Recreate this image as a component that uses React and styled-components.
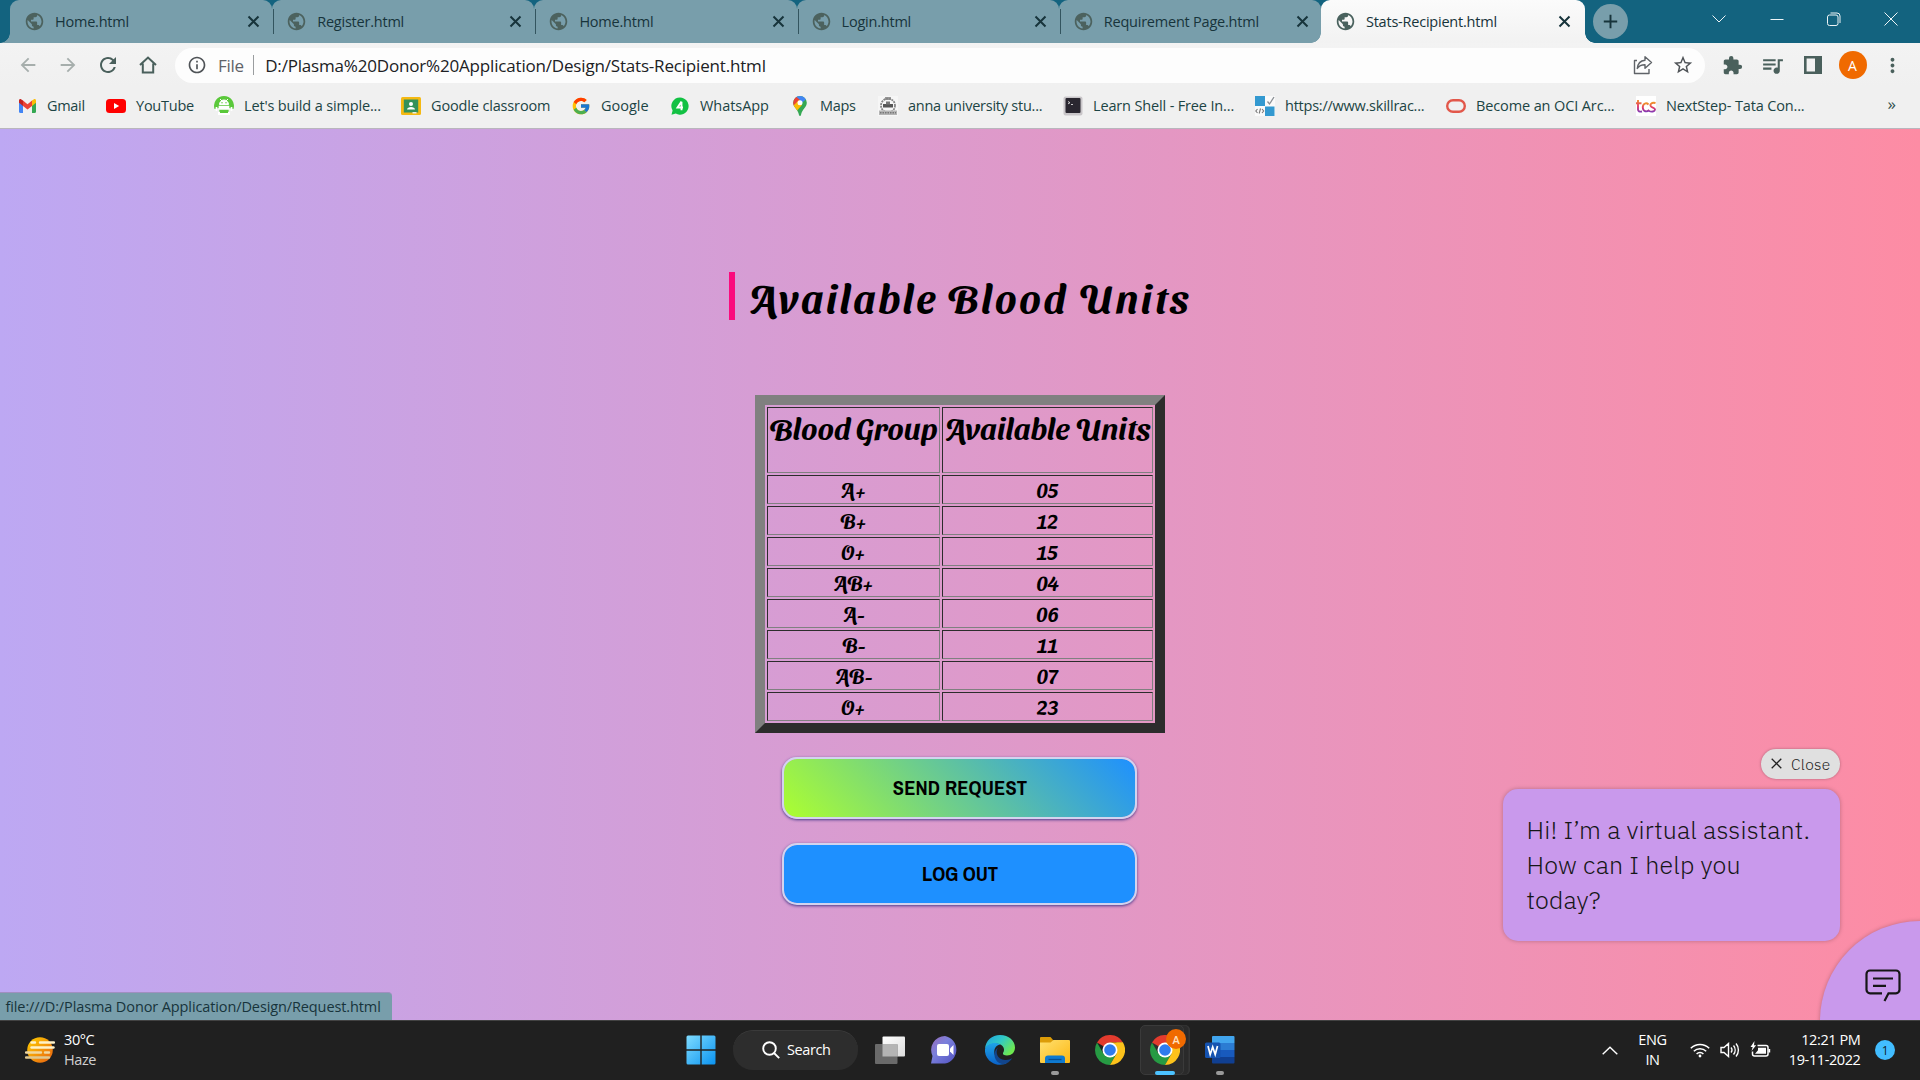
import React from "react";
import styled, { createGlobalStyle, css } from "styled-components";
import {
  MdPublic, MdArrowBack, MdArrowForward, MdRefresh, MdInfoOutline, MdStarOutline,
  MdExtension, MdQueueMusic, MdMoreVert, MdAdd,
} from "react-icons/md";
import { FcGoogle } from "react-icons/fc";

const ui = `"Open Sans", "Noto Sans", sans-serif`;
const display = `"Sansita Swashed", "Noto Sans", sans-serif`;
const plex = `"IBM Plex Sans", "Open Sans", sans-serif`;

const GlobalStyle = createGlobalStyle`
  * { box-sizing: border-box; }
  body { margin: 0; overflow: hidden; }
  svg { display: block; flex: none; }
`;

const Screen = styled.div`
  width: 1920px;
  height: 1080px;
  display: flex;
  flex-direction: column;
  overflow: hidden;
  font-family: ${ui};
`;

/* ---------- tab strip ---------- */
const TabStrip = styled.div`
  height: 43px;
  flex: none;
  display: flex;
  padding-left: 10px;
  background: #13637f;
  color: #17343b;
`;

const foot = (side, color) => css`
  content: "";
  position: absolute;
  bottom: 0;
  ${side}: -10px;
  width: 10px;
  height: 10px;
  background: radial-gradient(circle at ${side === "left" ? "0 0" : "100% 0"}, transparent 9.5px, ${color} 10px);
`;

const Tab = styled.div`
  position: relative;
  width: 262.2px;
  flex: none;
  display: flex;
  align-items: center;
  padding: 0 12px 1px 14px;
  border-radius: 9px 9px 0 0;
  background: #789eab;
  ${(p) => p.$active && css`z-index: 1; width: 264px; padding-right: 14px; background: linear-gradient(#fbfbfb, #f2f2f2);`}
  &::before { ${(p) => foot("left", p.$active ? "#f2f2f2" : "#789eab")} }
  &::after { ${(p) => foot("right", p.$active ? "#f2f2f2" : "#789eab")} }
`;

const TabTitle = styled.span`
  flex: 1;
  margin-left: 10px;
  font-size: 14.5px;
  letter-spacing: -0.22px;
  white-space: nowrap;
`;

const Favicon = styled.span`
  display: flex;
  color: ${(p) => (p.$active ? "#4a625e" : "#4c625e")};
`;

const TabDivider = styled.i`
  position: absolute;
  z-index: 1;
  right: -2px;
  top: 9px;
  width: 1px;
  height: 25px;
  background: #33555f;
`;

const NewTab = styled.div`
  width: 35px;
  height: 35px;
  margin: 4px 0 0 8px;
  border-radius: 50%;
  background: #789eab;
  display: grid;
  place-items: center;
`;

const WindowControls = styled.div`
  margin-left: auto;
  height: 37px;
  display: grid;
  grid-template-columns: repeat(4, 57.3px);
  place-items: center;
`;

/* ---------- toolbar ---------- */
const Toolbar = styled.div`
  height: 44px;
  flex: none;
  display: flex;
  align-items: center;
  background: linear-gradient(#f3f3f3, #f0f0f0);
  color: #4a605c;
`;

const NavButtons = styled.div`
  width: 175px;
  padding-left: 7.5px;
  display: grid;
  grid-template-columns: repeat(4, 40px);
  place-items: center;
`;

const NavIcon = styled.span`
  display: flex;
  color: ${(p) => (p.$dim ? "#a6aeac" : "#4a605c")};
`;

const Omnibox = styled.div`
  width: 1530px;
  height: 35px;
  display: flex;
  align-items: center;
  padding: 0 12px;
  border-radius: 18px;
  background: #fdfdfd;
  font-size: 17px;
`;

const Scheme = styled.span`
  margin-left: 11px;
  padding-right: 9px;
  letter-spacing: -0.3px;
  color: #5f6368;
`;

const Address = styled.span`
  flex: 1;
  display: flex;
  align-items: center;
  color: #202124;
  letter-spacing: -0.18px;
  &::before {
    content: "";
    width: 1.5px;
    height: 20px;
    margin-right: 11px;
    background: #9a9d9f;
  }
`;

const OmniActions = styled.div`
  display: grid;
  grid-template-columns: 40px 40px;
  margin-right: -10px;
  place-items: center;
`;

const ToolbarActions = styled.div`
  padding-left: 7.5px;
  display: grid;
  grid-template-columns: repeat(5, 40px);
  place-items: center;
`;

const Avatar = styled.span`
  width: 28px;
  height: 28px;
  border-radius: 50%;
  background: #f06a00;
  color: #fff;
  font-size: 14px;
  display: grid;
  place-items: center;
`;

/* ---------- bookmarks ---------- */
const BookmarkBar = styled.div`
  height: 42px;
  flex: none;
  display: flex;
  padding-left: 18px;
  background: #f0f0f0;
  border-bottom: 1px solid #b9b6bd;
  color: #1c4444;
`;

const Bookmark = styled.div`
  width: ${(p) => p.$w}px;
  height: 38px;
  flex: none;
  display: flex;
  align-items: center;
  gap: 10px;
  font-size: 14.5px;
  line-height: 20px;
  letter-spacing: ${(p) => p.$ls ?? -0.15}px;
  white-space: nowrap;
`;

const More = styled.span`
  margin: 5px 0 0 auto;
  padding-right: 24px;
  font-size: 17px;
  color: #33504e;
`;

/* ---------- page ---------- */
const Page = styled.main`
  position: relative;
  height: 891px;
  flex: none;
  overflow: hidden;
  display: flex;
  flex-direction: column;
  align-items: center;
  padding-top: 143px;
  background: linear-gradient(to right, #bda8f3, #fd8ca4);
`;

const Heading = styled.h1`
  width: 463px;
  height: 48px;
  margin: 0 0 75px;
  padding-left: 14px;
  border-left: 6px solid #fb0a7d;
  font: 600 40px/48px ${display};
  letter-spacing: 2.5px;
  color: #000;
  white-space: nowrap;
`;

const Table = styled.table`
  width: 410px;
  height: 338px;
  table-layout: fixed;
  border: 10px solid;
  border-color: #808080 #2c2c2c #2c2c2c #808080;
  border-spacing: 2px;
  font-family: ${display};
  font-weight: 600;
  color: #000;
`;

const cell = css`
  padding: 0;
  border: 1px solid;
  border-color: #2c2c2c #808080 #808080 #2c2c2c;
  text-align: center;
  white-space: nowrap;
`;

const Th = styled.th`
  ${cell}
  width: ${(p) => p.$w}px;
  height: 66px;
  padding-top: 1px;
  vertical-align: top;
  font-size: 30px;
  font-weight: 600;
  line-height: 36px;
`;

const Td = styled.td`
  ${cell}
  height: 29px;
  padding-top: 1px;
  font-size: 20px;
  line-height: 25px;
`;

const ActionButton = styled.button`
  width: 355px;
  height: 62px;
  margin: 24px 1px 0 0;
  padding: 0 0 1px 1px;
  border: 2px solid #d3d3ee;
  border-radius: 15px;
  box-shadow: 0 1px 3px #4a3a8a;
  background: ${(p) => p.$bg};
  background-clip: padding-box;
  font: 700 20.5px "Archivo Narrow", "Liberation Sans Narrow", "Liberation Sans", sans-serif;
  letter-spacing: ${(p) => p.$ls}px;
  color: #000;
`;

const StatusBubble = styled.div`
  position: absolute;
  left: 0;
  bottom: 0;
  width: 392px;
  height: 28px;
  padding-left: 5.5px;
  border-radius: 0 4px 0 0;
  border-top: 1px solid #a08fc0;
  background: #789eab;
  font-size: 14.5px;
  line-height: 27px;
  letter-spacing: -0.11px;
  color: #17343b;
  white-space: nowrap;
`;

/* ---------- chat widget ---------- */
const Chat = styled.aside`
  position: absolute;
  right: 80px;
  bottom: 79px;
  width: 337px;
  display: flex;
  flex-direction: column;
  align-items: flex-end;
  gap: 10px;
  font-family: ${plex};
  color: #161616;
`;

const CloseChat = styled.button`
  width: 79px;
  height: 30px;
  display: flex;
  align-items: center;
  gap: 9px;
  padding: 0 0 1px 10px;
  border: 0;
  border-radius: 15px;
  background: #e0e0e0;
  box-shadow: 0 0 3px rgba(0, 0, 0, 0.3);
  font: 300 15.5px ${plex};
  letter-spacing: 0.3px;
  color: #222;
`;

const Greeting = styled.div`
  width: 337px;
  height: 152px;
  padding: 23px 26px 0 23.5px;
  border-radius: 15px;
  background: #c999ec;
  box-shadow: 0 0 4px rgba(0, 0, 0, 0.25);
  font-size: 25px;
  font-weight: 300;
  line-height: 35px;
  letter-spacing: 0.16px;
`;

const Launcher = styled.div`
  position: absolute;
  left: 1820px;
  top: 792px;
  width: 200px;
  height: 200px;
  border-radius: 50%;
  background: #c999ec;
  box-shadow: 0 0 4px rgba(0, 0, 0, 0.25);
  padding: 47px 0 0 44px;
`;

/* ---------- taskbar ---------- */
const Taskbar = styled.footer`
  height: 60px;
  flex: none;
  display: grid;
  grid-template-columns: 674px 1fr 330px;
  grid-template-rows: 58px;
  background: #202020;
  border-top: 1px solid #424242;
  color: #fff;
  font-size: 14.5px;
  letter-spacing: -0.4px;
`;

const Weather = styled.div`
  display: flex;
  align-items: center;
  gap: 9px;
  padding: 0 0 1px 25px;
  span + span { color: #cfcfcf; }
`;

const Stack = styled.div`
  display: flex;
  flex-direction: column;
  align-items: ${(p) => p.$align || "flex-start"};
  line-height: 20px;
`;

const Apps = styled.div`
  display: flex;
  align-items: center;
`;

const AppSlot = styled.div`
  position: relative;
  width: ${(p) => p.$w || 55}px;
  height: 58px;
  display: grid;
  place-items: center;
`;

const Indicator = styled.i`
  position: absolute;
  bottom: 4px;
  left: calc(50% - ${(p) => (p.$active ? 10 : 4)}px);
  width: ${(p) => (p.$active ? 20 : 8)}px;
  height: 4px;
  border-radius: 2px;
  background: ${(p) => (p.$active ? "#4cc2ff" : "#9a9a9a")};
`;

const ActiveTile = styled.div`
  width: 44px;
  height: 50px;
  margin-right: 6px;
  padding-left: 6px;
  border-radius: 5px;
  border: 1px solid #3a3a3a;
  background: #2d2d2d;
  box-shadow: 5px 0 0 -0.5px #2a2a2a, 6px 0 0 0 #363636;
  display: grid;
  place-items: center;
`;

const ProfileBadge = styled.span`
  position: absolute;
  left: 29px;
  top: 8px;
  width: 20px;
  height: 20px;
  border-radius: 50%;
  background: #f06a00;
  color: #ffe0c0;
  font-size: 11px;
  font-weight: 600;
  display: grid;
  place-items: center;
`;

const Search = styled.div`
  width: 125px;
  height: 40px;
  margin: 0 5px 0 5px;
  padding: 0 0 2px 29px;
  border-radius: 20px;
  border-top: 1px solid #3a3a3a;
  background: #2d2d2d;
  display: flex;
  align-items: center;
  gap: 7px;
`;

const Tray = styled.div`
  display: grid;
  grid-template-columns: 40px 45px 40px 30px 30px 85.5px 49px;
  align-items: center;
  justify-items: center;
`;

const TrayEnd = styled.div`
  justify-self: end;
  padding-right: ${(p) => p.$pad || 0}px;
`;

const Count = styled.span`
  width: 20px;
  height: 20px;
  border-radius: 50%;
  background: #42bdff;
  color: #10202c;
  font-size: 12px;
  display: grid;
  place-items: center;
`;

/* ---------- icons ---------- */
const TabClose = () => (
  <svg width="13" height="13" viewBox="0 0 13 13" stroke="currentColor" strokeWidth="2"><path d="m1.500 1.500 10 10M11.500 1.500l-10 10" /></svg>
);
const GmailIcon = () => (
  <svg width="19" height="20" viewBox="0 0 19 20">
    <path d="M1 5v10.500A1.500 1.500 0 0 0 2.500 17H5V8z" fill="#4285f4" />
    <path d="M18 5v10.500a1.500 1.500 0 0 1-1.500 1.500H14V8z" fill="#34a853" />
    <path d="M14 4.500 16 3.300c1-.6 2 .2 2 1.300v2.200l-4 3.200z" fill="#fbbc04" />
    <path d="M5 4.600 9.500 8.200 14 4.600V10l-4.500 3.600L5 10z" fill="#ea4335" />
    <path d="M1 4.600c0-1.100 1-1.900 2-1.300l2 1.300V10L1 6.800z" fill="#c5221f" />
  </svg>
);
const YouTubeIcon = () => (
  <svg width="20" height="20" viewBox="0 0 20 20">
    <rect y="3" width="20" height="14" rx="3.500" fill="#f00" />
    <path d="M8 7v6l5.200-3z" fill="#fff" />
  </svg>
);
const AndroidIcon = () => (
  <svg width="20" height="20" viewBox="0 0 20 20">
    <path d="M10 0a10 10 0 0 0-9.500 13L5 12l1 7h8l1-7 4.500 1A10 10 0 0 0 10 0z" fill="#5ac83a" />
    <path d="M5.500 8.500a4.500 4.500 0 0 1 9 0zM6 3l2 2M14 3l-2 2" fill="#fff" stroke="#fff" />
    <circle cx="8" cy="6.800" r=".7" fill="#5ac83a" /><circle cx="12" cy="6.800" r=".7" fill="#5ac83a" />
    <path d="M2.500 11v4M17.500 11v4M5.500 10.500h9v2.500h-9z" stroke="#fff" strokeWidth="1.700" fill="#fff" />
    <path d="M4 16h12v3H4z" fill="#fff" /><path d="M6 14h8v3H6z" fill="#5ac83a" />
  </svg>
);
const ClassroomIcon = () => (
  <svg width="20" height="20" viewBox="0 0 20 20">
    <rect y="1" width="20" height="18" rx="1.500" fill="#f5b912" />
    <rect x="2.800" y="3.500" width="14.400" height="13" fill="#35915a" />
    <circle cx="10" cy="8" r="2" fill="#fff" /><path d="M6 13.500c0-3.500 8-3.500 8 0z" fill="#fff" />
    <path d="M11.500 16h4v1.500h-4z" fill="#e8f0e8" />
  </svg>
);
const WhatsAppIcon = () => (
  <svg width="20" height="20" viewBox="0 0 20 20">
    <path d="M10 1.500A8.600 8.600 0 0 0 2.600 14.500L1.500 18.700l4.300-1.100A8.600 8.600 0 1 0 10 1.500z" fill="#12c143" />
    <path d="M11.500 5.500 7.500 11.500h5.500M11.500 5.800v8.500" stroke="#fff" strokeWidth="1.900" fill="none" />
  </svg>
);
const MapsIcon = () => (
  <svg width="20" height="20" viewBox="0 0 20 20">
    <defs><clipPath id="pin"><path d="M10 0a6.700 6.700 0 0 0-6.800 6.700c0 4.600 4.400 5.800 5.800 12.300.2 1.300 1.800 1.300 2 0 1.400-6.500 5.800-7.700 5.800-12.300A6.700 6.700 0 0 0 10 0z" /></clipPath></defs>
    <g clipPath="url(#pin)">
      <path d="M0 0h20v20H0z" fill="#34a853" />
      <path d="M5 0h15L8 10z" fill="#4285f4" />
      <path d="M0 0h5.500L10 4 3 12z" fill="#ea4335" />
      <path d="M2 11 9 4l3 5-7 8z" fill="#fbbc04" />
    </g>
    <circle cx="10" cy="6.700" r="2.500" fill="#fff" />
  </svg>
);
const CrestIcon = () => (
  <svg width="20" height="20" viewBox="0 0 20 20">
    <path d="M0 0h20v20H0z" fill="#f6f6f6" />
    <path d="M7 1h6v3H7z" fill="#999" />
    <circle cx="10" cy="9.500" r="7" fill="none" stroke="#858585" strokeWidth="1.800" strokeDasharray="2 .8" />
    <path d="M5 8h10v3.500H5z" fill="#555" /><path d="M8 5.500h4v3H8z" fill="#777" />
    <path d="M1 14.500h18V19H1z" fill="#b4b4b4" /><path d="M2 16.700h16" stroke="#777" strokeWidth="1.500" strokeDasharray="1.500 1" />
  </svg>
);
const ShellIcon = () => (
  <svg width="20" height="20" viewBox="0 0 20 20">
    <rect x=".5" y=".5" width="19" height="19" rx="2" fill="#c9c6c9" />
    <rect x="2.500" y="2" width="15" height="15" rx="1" fill="#2a2730" />
    <path d="M5 5.500l2 1.200-2 1.200M8 8.500h2" stroke="#ddd" fill="none" strokeWidth=".9" />
  </svg>
);
const SkillIcon = () => (
  <svg width="20" height="20" viewBox="0 0 20 20">
    <path d="M0 0h20v20H0z" fill="#fafafa" />
    <path d="M0 0h10v10H0zM10 10.500h9.500V20H10z" fill="#3399d0" />
    <path d="M12.500 5.500 14.500 8 19 1" stroke="#8a8f94" strokeWidth="1.300" fill="none" />
    <path d="M2.500 13 .8 15l1.700 2M7 13l1.700 2L7 17M5.500 12.500l-1.300 5" stroke="#777" fill="none" strokeWidth="1.100" />
  </svg>
);
const OracleIcon = () => (
  <svg width="20" height="20" viewBox="0 0 20 20">
    <rect x="1.200" y="4.200" width="17.600" height="11.600" rx="5.800" fill="none" stroke="#e2574a" strokeWidth="2.400" />
  </svg>
);
const TcsIcon = () => (
  <svg width="20" height="20" viewBox="0 0 20 20">
    <defs><linearGradient id="tcs" x1="0" y1="0" x2="0" y2="1"><stop offset="0" stopColor="#f0902a" /><stop offset=".55" stopColor="#e03a6c" /><stop offset="1" stopColor="#8a3ab0" /></linearGradient></defs>
    <path d="M0 0h20v20H0z" fill="#fff" />
    <g fill="none" stroke="url(#tcs)" strokeWidth="1.900">
      <path d="M2 4v9.500c0 1.600 1.500 2.500 4 2M0 7.300h5.500" />
      <path d="M12.500 8.500C10 6 6.500 8 6.800 11.800c.3 3.700 4 4.700 6.500 2.200" />
      <path d="M19.500 7c-4-1-6 1.500-4.500 3.500 1 1.300 4.300 1 4 3.200-.3 2-3.500 2.500-6 1.300" />
    </g>
  </svg>
);
const HomeIcon = () => (
  <svg width="18" height="20" viewBox="0 0 18 20" fill="none" stroke="currentColor" strokeWidth="2">
    <path d="M1 10 9 2.500 17 10M3.800 8.500V17.500h10.400V8.500" />
  </svg>
);
const ShareIcon = () => (
  <svg width="20" height="20" viewBox="0 0 20 20" fill="none" stroke="#5f6368" strokeWidth="1.400" strokeLinejoin="round">
    <path d="M4 5.500H1.500v13h14.500V14" />
    <path d="M12 1.800 18.500 7.500 12 13.200V9.800c-3.500 0-6 1-7.700 3.700C4.700 9 7.500 5.600 12 5.200z" />
  </svg>
);
const PanelIcon = () => (
  <svg width="18" height="18" viewBox="0 0 18 18">
    <path d="M1.300 1.300h15.400v15.400H1.300z" fill="none" stroke="#4a605c" strokeWidth="2.600" />
    <path d="M11 1h6v16h-6z" fill="#4a605c" />
  </svg>
);
const CtlIcon = ({ d }) => (
  <svg width="14" height="14" viewBox="0 0 14 14" fill="none" stroke="#eef5f7" strokeWidth="1"><path d={d} /></svg>
);
const MessageIcon = () => (
  <svg width="38" height="34" viewBox="0 0 38 34" fill="none" stroke="#161616" strokeWidth="2.200">
    <path d="M18 25.300H6A3.500 3.500 0 0 1 2.500 21.800V6A3.500 3.500 0 0 1 6 2.500h26A3.500 3.500 0 0 1 35.500 6v15.800a3.500 3.500 0 0 1-3.500 3.500h-7.500l-4 7.700M9 10.500h20M9 17.800h13" />
  </svg>
);
const HazeIcon = () => (
  <svg width="30" height="28" viewBox="0 0 30 28">
    <defs><linearGradient id="sun" x1="0" y1="0" x2="1" y2="1"><stop offset="0" stopColor="#ffd000" /><stop offset=".9" stopColor="#ea6a10" /></linearGradient></defs>
    <circle cx="15" cy="14" r="12.800" fill="url(#sun)" />
    <g strokeWidth="2.400" strokeLinecap="round">
      <path d="M6.500 6.500h3.500M15 6.500h14" stroke="#fff2c8" /><path d="M6.500 11.500h22" stroke="#fff2c8" />
      <path d="M1 16.500h15M20 16.500h4" stroke="#f0d8a0" /><path d="M1 21.500h23" stroke="#e0c890" />
    </g>
  </svg>
);
const WindowsIcon = () => (
  <svg width="30" height="30" viewBox="0 0 30 30">
    <defs><linearGradient id="win" x1="0" y1="0" x2="1" y2="1"><stop offset="0" stopColor="#7fdcff" /><stop offset="1" stopColor="#0a93f0" /></linearGradient></defs>
    <path d="M.5 2A1.500 1.500 0 0 1 2 .5h12.300v13.800H.5zM15.700.5H28A1.500 1.500 0 0 1 29.500 2v12.300H15.700zM.5 15.700h13.800v13.800H2A1.500 1.500 0 0 1 .5 28zM15.700 15.700h13.800V28a1.500 1.500 0 0 1-1.500 1.500H15.700z" fill="url(#win)" />
  </svg>
);
const GlassIcon = () => (
  <svg width="18" height="18" viewBox="0 0 18 18" fill="none" stroke="#fff" strokeWidth="1.900"><circle cx="7.500" cy="7.500" r="6.300" /><path d="m12 12 5.200 5.200" /></svg>
);
const TaskViewIcon = () => (
  <svg width="30" height="30" viewBox="0 0 30 30">
    <defs><linearGradient id="tv" x1="0" y1="0" x2="1" y2="1"><stop offset="0" stopColor="#fff" /><stop offset="1" stopColor="#dcdcdc" /></linearGradient></defs>
    <rect x="7.500" y="1.500" width="22.500" height="20" rx="1" fill="url(#tv)" />
    <rect y="9" width="22.500" height="20" rx="1" fill="#6a6a6a" />
    <path d="M7.500 9h15v12.500h-15z" fill="#b4b4b4" />
  </svg>
);
const MeetIcon = () => (
  <svg width="30" height="30" viewBox="0 0 30 30">
    <defs><linearGradient id="meet" x1="0" y1="0" x2="1" y2="1"><stop offset="0" stopColor="#9a6ab8" /><stop offset=".4" stopColor="#7b80dc" /><stop offset="1" stopColor="#5050c0" /></linearGradient></defs>
    <path d="M15 1a14 14 0 0 0-12.500 20L1 28.500h14A14 14 0 0 0 15 1z" fill="url(#meet)" />
    <rect x="7" y="9" width="12" height="12" rx="2" fill="#fff" /><path d="M20 13.500 23.500 10v10L20 16.500z" fill="#fff" />
  </svg>
);
const EdgeIcon = () => (
  <svg width="30" height="30" viewBox="0 0 30 30">
    <defs>
      <linearGradient id="edgeTop" x1="0" y1="0" x2="1" y2=".6"><stop offset="0" stopColor="#1fa0e0" /><stop offset=".5" stopColor="#30c8c8" /><stop offset="1" stopColor="#6ee850" /></linearGradient>
      <linearGradient id="edgeLow" x1="0" y1="0" x2="0" y2="1"><stop offset="0" stopColor="#1fa4e8" /><stop offset="1" stopColor="#0a62c8" /></linearGradient>
    </defs>
    <path d="M0 14C.5 5.500 7 0 15 0c9 0 15 6 15 12.500 0 5-3.500 8-8 8-3 0-4.500-1.200-4-2.500 1.500-2 1.500-5-.5-7C12.500 6.500 3 8.500 0 14z" fill="url(#edgeTop)" />
    <path d="M0 14C2 8.500 10 6 15.500 9.500 11 10 8.500 14 9.500 19c1 6 7 10 13 8.500C19.500 30 12 31 7 27.500 2 24.500-.5 19.500 0 14z" fill="url(#edgeLow)" />
    <path d="M13 12.500C10 17 12 24.500 20 25c3 .2 5.500-.8 7-1.700C25 27 21 29.500 17 29 9 27.500 7 17 13 12.500z" fill="#12458c" />
  </svg>
);
const FolderIcon = () => (
  <svg width="30" height="30" viewBox="0 0 30 30">
    <defs><linearGradient id="fold" x1="0" y1="0" x2="1" y2="1"><stop offset="0" stopColor="#ffe070" /><stop offset="1" stopColor="#fdb813" /></linearGradient></defs>
    <path d="M0 3a1 1 0 0 1 1-1h9.500l3 3.500V9H0z" fill="#dc9c08" />
    <path d="M0 7.500h10.500L13.500 5H29a1 1 0 0 1 1 1v21a1 1 0 0 1-1 1H1a1 1 0 0 1-1-1z" fill="url(#fold)" />
    <path d="M5 28v-4.500A3 3 0 0 1 8 20.500h14a3 3 0 0 1 3 3V28z" fill="#0f7ad0" />
    <path d="M8.500 24.500h13" stroke="#084f92" strokeWidth="1.300" />
  </svg>
);
const ChromeIcon = () => (
  <svg width="30" height="30" viewBox="0 0 30 30">
    <path d="M15 15 2.010 7.500A15 15 0 0 1 28 7.500H15z" fill="#e33b2e" />
    <path d="M2.010 7.500A15 15 0 0 0 15 30l6.500-11.250L15 15 8.500 18.750z" fill="#269a43" />
    <path d="M28 7.500A15 15 0 0 1 15 30l6.500-11.250V7.500z" fill="#fcc21b" />
    <path d="M15 7.500h13v1L21.500 18.750z" fill="#fcc21b" />
    <circle cx="15" cy="15" r="7.500" fill="#fff" /><circle cx="15" cy="15" r="5.800" fill="#2f7bee" />
  </svg>
);
const WordIcon = () => (
  <svg width="30" height="30" viewBox="0 0 30 30">
    <path d="M7 2a1 1 0 0 1 1-1h20.500a1 1 0 0 1 1 1v6H7z" fill="#41a5ee" /><path d="M7 8h22.500v7H7z" fill="#2b7cd3" />
    <path d="M7 15h22.500v7H7z" fill="#185abd" /><path d="M7 22h22.500v5.500a1 1 0 0 1-1 1H8a1 1 0 0 1-1-1z" fill="#103f91" />
    <rect x="0" y="7.500" width="15.500" height="15.500" rx="1.500" fill="#1553b0" />
    <path d="m3 11 2.200 8.500L7.700 12l2.500 7.500L12.500 11" stroke="#fff" strokeWidth="1.700" fill="none" />
  </svg>
);
const WifiIcon = () => (
  <svg width="20" height="16" viewBox="0 0 20 16" fill="none" stroke="#fff" strokeWidth="1.500">
    <path d="M.8 6.200a13 13 0 0 1 18.400 0M3.800 9.200a8.800 8.800 0 0 1 12.400 0M6.600 12a4.800 4.800 0 0 1 6.800 0" /><circle cx="10" cy="14" r="1.400" fill="#fff" stroke="none" />
  </svg>
);
const SpeakerIcon = () => (
  <svg width="21" height="16" viewBox="0 0 21 16" fill="none" stroke="#fff" strokeWidth="1.400">
    <path d="M1 5.500h3L8.500 1.500v13L4 10.500H1zM11 5.500a4 4 0 0 1 0 5M13.500 3.500a7 7 0 0 1 0 9M16 1.500a10 10 0 0 1 0 13" />
  </svg>
);
const BatteryIcon = () => (
  <svg width="21" height="18" viewBox="0 0 21 18">
    <path d="M7.500 4.500H16a2 2 0 0 1 2 2V13a2 2 0 0 1-2 2H4.500a2 2 0 0 1-2-2v-2.500" fill="none" stroke="#fff" strokeWidth="1.500" />
    <path d="M8 6.700h8v6H5l3-3.500zM18.500 8h1.700v3.500h-1.700z" fill="#fff" /><path d="M4.500 0 .5 6h2.200L1.500 10l4.700-5.800H4z" fill="#fff" />
  </svg>
);

/* ---------- data ---------- */
const tabs = ["Home.html", "Register.html", "Home.html", "Login.html", "Requirement Page.html", "Stats-Recipient.html"];

const bookmarks = [
  { w: 88, icon: <GmailIcon />, label: "Gmail", ls: -0.3 },
  { w: 108, icon: <YouTubeIcon />, label: "YouTube", ls: -0.23 },
  { w: 187, icon: <AndroidIcon />, label: "Let's build a simple..." },
  { w: 170, icon: <ClassroomIcon />, label: "Goodle classroom" },
  { w: 99, icon: <FcGoogle size={20} />, label: "Google", ls: 0 },
  { w: 120, icon: <WhatsAppIcon />, label: "WhatsApp", ls: -0.05 },
  { w: 88, icon: <MapsIcon />, label: "Maps", ls: -0.3 },
  { w: 185, icon: <CrestIcon />, label: "anna university stu...", ls: -0.24 },
  { w: 192, icon: <ShellIcon />, label: "Learn Shell - Free In..." },
  { w: 191, icon: <SkillIcon />, label: "https://www.skillrac...", ls: -0.24 },
  { w: 190, icon: <OracleIcon />, label: "Become an OCI Arc...", ls: -0.12 },
  { w: 180, icon: <TcsIcon />, label: "NextStep- Tata Con..." },
];

const stock = [["A+", "05"], ["B+", "12"], ["O+", "15"], ["AB+", "04"], ["A-", "06"], ["B-", "11"], ["AB-", "07"], ["O+", "23"]];

export default function App() {
  return (
    <Screen>
      <GlobalStyle />
      <TabStrip>
        {tabs.map((title, i) => {
          const active = i === tabs.length - 1;
          return (
            <Tab key={i} $active={active}>
              <Favicon $active={active}><MdPublic size={21} /></Favicon>
              <TabTitle>{title}</TabTitle>
              <TabClose />
              {i < tabs.length - 2 && <TabDivider />}
            </Tab>
          );
        })}
        <NewTab><MdAdd size={23} /></NewTab>
        <WindowControls>
          <CtlIcon d="m.5 3.500 6.500 6.500 6.500-6.500" />
          <CtlIcon d="M.5 7.500h13" />
          <CtlIcon d="M2.500 3h6.500a2 2 0 0 1 2 2v6.500a2 2 0 0 1-2 2H2.500a2 2 0 0 1-2-2V5a2 2 0 0 1 2-2zM3.500 1H10a3 3 0 0 1 3 3v7" />
          <CtlIcon d="m.5.5 13 13M13.500.5l-13 13" />
        </WindowControls>
      </TabStrip>

      <Toolbar>
        <NavButtons>
          <NavIcon $dim><MdArrowBack size={22} /></NavIcon>
          <NavIcon $dim><MdArrowForward size={22} /></NavIcon>
          <NavIcon><MdRefresh size={24} /></NavIcon>
          <NavIcon><HomeIcon /></NavIcon>
        </NavButtons>
        <Omnibox>
          <MdInfoOutline size={20} color="#4f5357" />
          <Scheme>File</Scheme>
          <Address>D:/Plasma%20Donor%20Application/Design/Stats-Recipient.html</Address>
          <OmniActions>
            <ShareIcon />
            <MdStarOutline size={22} color="#4f5357" />
          </OmniActions>
        </Omnibox>
        <ToolbarActions>
          <MdExtension size={21} />
          <MdQueueMusic size={25} />
          <PanelIcon />
          <Avatar>A</Avatar>
          <MdMoreVert size={23} />
        </ToolbarActions>
      </Toolbar>

      <BookmarkBar>
        {bookmarks.map((b) => (
          <Bookmark key={b.label} $w={b.w} $ls={b.ls}>{b.icon}{b.label}</Bookmark>
        ))}
        <More>»</More>
      </BookmarkBar>

      <Page>
        <Heading>Available Blood Units</Heading>
        <Table>
          <thead>
            <tr><Th $w={173}>Blood Group</Th><Th $w={211}>Available Units</Th></tr>
          </thead>
          <tbody>
            {stock.map(([group, units], i) => (
              <tr key={i}><Td>{group}</Td><Td>{units}</Td></tr>
            ))}
          </tbody>
        </Table>
        <ActionButton $bg="linear-gradient(45deg, greenyellow, dodgerblue)" $ls={0.15}>SEND REQUEST</ActionButton>
        <ActionButton $bg="dodgerblue" $ls={-0.1}>LOG OUT</ActionButton>

        <StatusBubble>file:///D:/Plasma Donor Application/Design/Request.html</StatusBubble>
        <Chat>
          <CloseChat>
            <svg width="11" height="11" viewBox="0 0 11 11" stroke="#222" strokeWidth="1.300"><path d="m.7.7 9.600 9.600M10.300.7.7 10.300" /></svg>
            Close
          </CloseChat>
          <Greeting>Hi! I’m a virtual assistant. How can I help you today?</Greeting>
        </Chat>
        <Launcher><MessageIcon /></Launcher>
      </Page>

      <Taskbar>
        <Weather>
          <HazeIcon />
          <Stack><span>30°C</span><span>Haze</span></Stack>
        </Weather>
        <Apps>
          <AppSlot $w={54}><WindowsIcon /></AppSlot>
          <Search><GlassIcon />Search</Search>
          <AppSlot $w={54}><TaskViewIcon /></AppSlot>
          <AppSlot><MeetIcon /></AppSlot>
          <AppSlot><EdgeIcon /></AppSlot>
          <AppSlot><FolderIcon /><Indicator /></AppSlot>
          <AppSlot><ChromeIcon /></AppSlot>
          <AppSlot><ActiveTile><ChromeIcon /></ActiveTile><ProfileBadge>A</ProfileBadge><Indicator $active /></AppSlot>
          <AppSlot><WordIcon /><Indicator /></AppSlot>
        </Apps>
        <Tray>
          <svg width="16" height="9" viewBox="0 0 16 9" fill="none" stroke="#fff" strokeWidth="1.400"><path d="m.7 8.300 7.300-7 7.300 7" /></svg>
          <Stack $align="center"><span>ENG</span><span>IN</span></Stack>
          <TrayEnd $pad={5}><WifiIcon /></TrayEnd>
          <SpeakerIcon />
          <BatteryIcon />
          <TrayEnd><Stack $align="flex-end"><span>12:21 PM</span><span>19-11-2022</span></Stack></TrayEnd>
          <Count>1</Count>
        </Tray>
      </Taskbar>
    </Screen>
  );
}
